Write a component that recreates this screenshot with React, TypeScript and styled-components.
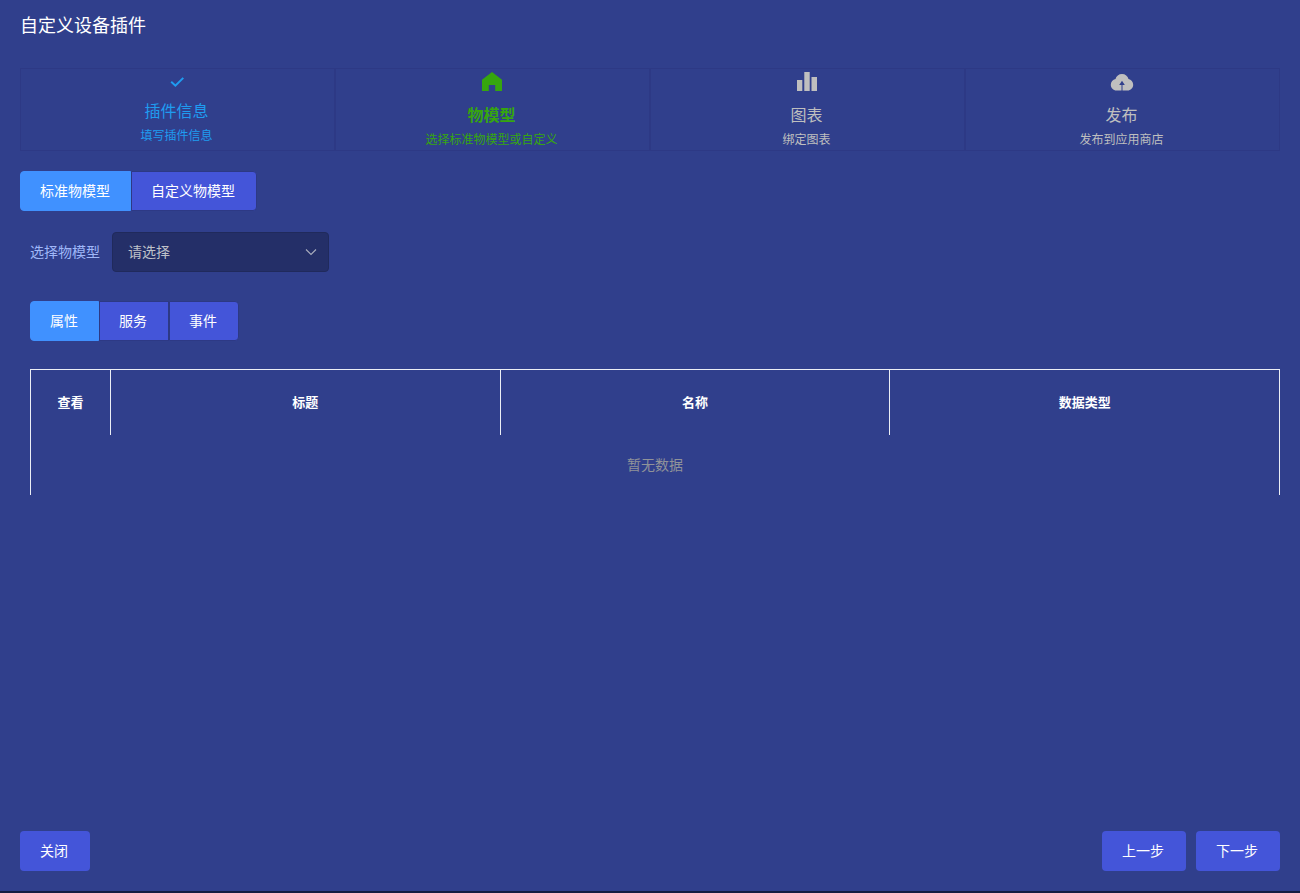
import React, { useState } from 'react';
import styled, { createGlobalStyle } from 'styled-components';

const GlobalStyle = createGlobalStyle`
  *, *::before, *::after { box-sizing: border-box; }
  body {
    margin: 0;
    background: #303f8c;
    color: #fff;
    font-family: "Noto Sans CJK SC", sans-serif;
    font-size: 14px;
    line-height: 20px;
  }
  button, select, input { font: inherit; }
`;

type StepState = 'done' | 'current' | 'waiting';

const stepColors: Record<StepState, string> = {
  done: '#1f9cf0',
  current: '#36a60e',
  waiting: '#bfbfbf',
};

const Page = styled.div`
  display: flex;
  flex-direction: column;
  min-height: 100vh;
  border-bottom: 2px solid #151d42;
`;

const Title = styled.h1`
  margin: 0;
  padding: 12px 20px 32px;
  font-size: 18px;
  font-weight: 400;
  line-height: 24px;
`;

const Main = styled.main`
  flex: 1;
  padding: 0 20px;
`;

const Steps = styled.ol`
  display: grid;
  grid-template-columns: repeat(4, 1fr);
  margin: 0 0 20px;
  padding: 0;
  list-style: none;
`;

const StepItem = styled.li<{ $state: StepState }>`
  display: flex;
  flex-direction: column;
  align-items: center;
  padding-right: 2px;
  border: 1px solid #2d3985;
  color: ${({ $state }) => stepColors[$state]};
  text-align: center;
`;

const StepIcon = styled.svg<{ $state: StepState }>`
  width: 26px;
  height: 26px;
  margin-bottom: ${({ $state }) => ($state === 'done' ? 3 : 7)}px;
`;

const StepTitle = styled.span<{ $state: StepState }>`
  margin-bottom: 1px;
  font-size: 16px;
  font-weight: ${({ $state }) => ($state === 'current' ? 700 : 400)};
  line-height: 24px;
`;

const StepText = styled.span`
  font-size: 12px;
  line-height: 23px;
`;

const RadioGroup = styled.div`
  display: flex;
`;

const RadioInput = styled.input`
  appearance: none;
  width: 0;
  height: 0;
  margin: 0;
  outline: none;
`;

const RadioButton = styled.label`
  display: flex;
  align-items: center;
  height: 40px;
  padding: 0 21px 2px 19px;
  border: 1px solid #2d3985;
  background: #4455d9;
  cursor: pointer;

  &:first-child {
    padding-right: 20px;
    border-radius: 4px 0 0 4px;
  }
  &:last-child { border-radius: 0 4px 4px 0; }
  &:has(input:checked) {
    border-color: #4091ff;
    background: #4091ff;
  }
  &:has(input:focus-visible) { text-decoration: underline; }
`;

const Field = styled.div`
  display: flex;
  align-items: center;
  gap: 12px;
  margin: 21px 0 29px;
  padding-left: 10px;
`;

const FieldLabel = styled.label`
  padding-bottom: 2px;
  color: #9fb7f8;
`;

const SelectBox = styled.div`
  display: grid;
  align-items: center;
  width: 217px;
`;

const Select = styled.select`
  grid-area: 1 / 1;
  appearance: none;
  height: 40px;
  padding: 0 30px 2px 15px;
  border: 1px solid #202a5c;
  border-radius: 4px;
  background: #242f68;
  color: #bfc1c8;
`;

const Chevron = styled.svg`
  grid-area: 1 / 1;
  justify-self: end;
  width: 12px;
  height: 8px;
  margin-right: 12px;
  pointer-events: none;
`;

const Panel = styled.section`
  padding-left: 10px;
`;

const Table = styled.table`
  width: 100%;
  margin-top: 28px;
  border: 1px solid #ebeef5;
  border-bottom: 0;
  border-spacing: 0;
  table-layout: fixed;
`;

const HeadCell = styled.th`
  height: 65px;
  padding: 0 0 2px;
  font-size: 13px;
  font-weight: 700;

  & + & { border-left: 1px solid #ebeef5; }
  &:first-child { width: 79px; }
`;

const EmptyCell = styled.td`
  height: 60px;
  padding: 0 0 2px;
  color: #909399;
  text-align: center;
`;

const Footer = styled.footer`
  display: flex;
  gap: 10px;
  padding: 20px;
`;

const Button = styled.button<{ $pushRight?: boolean }>`
  height: 40px;
  margin: 0;
  margin-left: ${({ $pushRight }) => ($pushRight ? 'auto' : '0')};
  padding: 0 22px 2px 20px;
  border: 0;
  border-radius: 4px;
  background: #4455d9;
  color: #fff;
  cursor: pointer;
`;

const icons = {
  check: (
    <path d="M7.200 12.800l4.200 3.900L19.300 8.900" fill="none" stroke="currentColor" strokeWidth="2" />
  ),
  house: <path d="M3 10.800L13 3l10 7.800V22h-6.800v-6H9.800v6H3z" fill="currentColor" />,
  chart: (
    <path d="M3 11h5.300v11H3zM10.300 3h5.400v19h-5.400zM17.500 8h5.500v14h-5.500z" fill="currentColor" />
  ),
  cloud: (
    <path
      fillRule="evenodd"
      fill="currentColor"
      d="M6.500 10C7.200 7 9.800 5 13 5s5.800 2 6.500 5C22.200 10.500 24.200 12.800 24.200 15.700c0 3.200-2.500 5.800-5.700 5.800h-5v-5.500h2.300L13 11.800 10.200 16h2.300v5.500h-5c-3.200 0-5.700-2.600-5.700-5.800 0-2.900 2-5.200 4.700-5.700z"
    />
  ),
};

const steps: { icon: keyof typeof icons; title: string; text: string; state: StepState }[] = [
  { icon: 'check', title: '插件信息', text: '填写插件信息', state: 'done' },
  { icon: 'house', title: '物模型', text: '选择标准物模型或自定义', state: 'current' },
  { icon: 'chart', title: '图表', text: '绑定图表', state: 'waiting' },
  { icon: 'cloud', title: '发布', text: '发布到应用商店', state: 'waiting' },
];

const columns = ['查看', '标题', '名称', '数据类型'];

function RadioButtons({ name, label, options }: { name: string; label: string; options: string[] }) {
  const [value, setValue] = useState(options[0]);
  return (
    <RadioGroup role="radiogroup" aria-label={label}>
      {options.map((option) => (
        <RadioButton key={option}>
          <RadioInput
            type="radio"
            name={name}
            value={option}
            checked={value === option}
            onChange={() => setValue(option)}
          />
          {option}
        </RadioButton>
      ))}
    </RadioGroup>
  );
}

export default function App() {
  return (
    <>
      <GlobalStyle />
      <Page>
        <Title>自定义设备插件</Title>
        <Main>
          <Steps>
            {steps.map(({ icon, title, text, state }) => (
              <StepItem key={title} $state={state} aria-current={state === 'current' ? 'step' : undefined}>
                <StepIcon $state={state} viewBox="0 0 26 26" aria-hidden="true">
                  {icons[icon]}
                </StepIcon>
                <StepTitle $state={state}>{title}</StepTitle>
                <StepText>{text}</StepText>
              </StepItem>
            ))}
          </Steps>
          <RadioButtons name="source" label="物模型" options={['标准物模型', '自定义物模型']} />
          <Field>
            <FieldLabel htmlFor="model">选择物模型</FieldLabel>
            <SelectBox>
              <Select id="model" defaultValue="">
                <option value="">请选择</option>
              </Select>
              <Chevron viewBox="0 0 12 8" aria-hidden="true">
                <path d="M1 1.500l5 5 5-5" fill="none" stroke="#a9adbd" strokeWidth="1.100" />
              </Chevron>
            </SelectBox>
          </Field>
          <Panel>
            <RadioButtons name="section" label="属性" options={['属性', '服务', '事件']} />
            <Table>
              <thead>
                <tr>
                  {columns.map((column) => (
                    <HeadCell key={column} scope="col">{column}</HeadCell>
                  ))}
                </tr>
              </thead>
              <tbody>
                <tr>
                  <EmptyCell colSpan={columns.length}>暂无数据</EmptyCell>
                </tr>
              </tbody>
            </Table>
          </Panel>
        </Main>
        <Footer>
          <Button type="button">关闭</Button>
          <Button type="button" $pushRight>上一步</Button>
          <Button type="button">下一步</Button>
        </Footer>
      </Page>
    </>
  );
}
